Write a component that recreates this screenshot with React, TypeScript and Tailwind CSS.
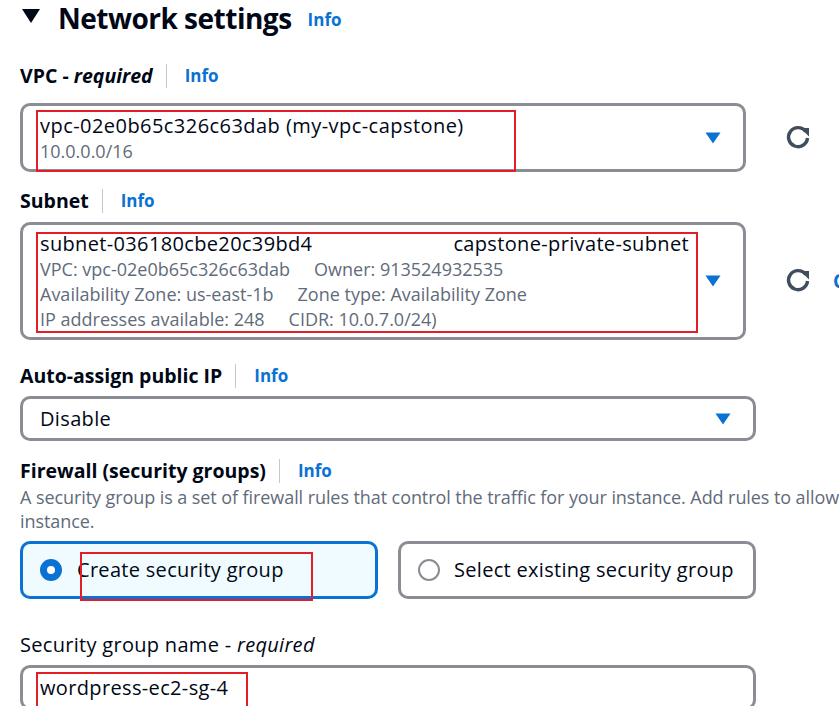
import React from "react";

const Info = () => (
  <span className="text-[17px] font-bold text-[#0972d3] leading-6">Info</span>
);

const Divider = () => <span className="ml-[13px] mr-[18px] h-[24px] w-px bg-[#c6c6cd]" />;

const Caret = ({ className = "" }: { className?: string }) => (
  <svg width="16" height="12" viewBox="0 0 16 12" className={className}>
    <path d="M0.5 0.5h15L8 11.5z" fill="#0972d3" />
  </svg>
);

const Refresh = () => (
  <svg width="26" height="26" viewBox="0 0 26 26" fill="none">
    <path d="M20.6 6.4A9.5 9.5 0 1 0 22.5 13" stroke="#414d5c" strokeWidth="3.4" />
    <path d="M15.5 3h8.5v8.5z" fill="#414d5c" />
  </svg>
);

const RedBox = ({ className }: { className: string }) => (
  <div className={`pointer-events-none absolute border-2 border-[#e41e26] ${className}`} />
);

export default function App() {
  return (
    <div className="relative h-[706px] w-[839px] overflow-hidden bg-white font-['Open_Sans',sans-serif] text-[#000716]">
      <div className="w-[1100px] pl-[20px]">
        {/* Header */}
        <div className="mt-[-2px] flex h-[40px] items-center">
          <svg width="18" height="14" viewBox="0 0 18 14" className="ml-[2px] mt-[-4px]">
            <path d="M0 0h18L9 14z" fill="#000716" />
          </svg>
          <h2 className="ml-[18px] text-[28px] font-bold leading-9 tracking-[-0.5px]">Network settings</h2>
          <span className="ml-[16px] mt-[4px]">
            <Info />
          </span>
        </div>

        {/* VPC */}
        <div className="mt-[24px] flex h-[28px] items-center">
          <span className="text-[19.5px] font-bold leading-6">
            VPC - <i>required</i>
          </span>
          <Divider />
          <Info />
        </div>
        <div className="mt-[13px] flex items-center">
          <div className="relative flex h-[69px] w-[726px] items-center rounded-[10px] border-[3px] border-[#8c8c94] pl-[17px] pr-[22px]">
            <div className="flex-1">
              <div className="text-[20px] leading-[26px] tracking-[0.45px]">vpc-02e0b65c326c63dab (my-vpc-capstone)</div>
              <div className="text-[18px] leading-[24px] text-[#5f6b7a]">10.0.0.0/16</div>
            </div>
            <Caret />
            <RedBox className="left-[13px] top-[4px] h-[62px] w-[480px]" />
          </div>
          <div className="ml-[39px]">
            <Refresh />
          </div>
        </div>

        {/* Subnet */}
        <div className="mt-[15px] flex h-[28px] items-center">
          <span className="text-[19.5px] font-bold leading-6">Subnet</span>
          <Divider />
          <Info />
        </div>
        <div className="mt-[7px] flex items-center">
          <div className="relative flex h-[118px] w-[726px] items-center rounded-[10px] border-[3px] border-[#8c8c94] pl-[17px] pr-[22px]">
            <div className="flex-1">
              <div className="flex w-[649px] justify-between text-[20px] leading-[26px] tracking-[0.35px]">
                <span>subnet-036180cbe20c39bd4</span>
                <span>capstone-private-subnet</span>
              </div>
              <div className="text-[18px] leading-[25px] text-[#5f6b7a]">
                <div className="flex gap-[24px]">
                  <span>VPC: vpc-02e0b65c326c63dab</span>
                  <span>Owner: 913524932535</span>
                </div>
                <div className="flex gap-[24px]">
                  <span>Availability Zone: us-east-1b</span>
                  <span>Zone type: Availability Zone</span>
                </div>
                <div className="flex gap-[24px]">
                  <span>IP addresses available: 248</span>
                  <span>CIDR: 10.0.7.0/24)</span>
                </div>
              </div>
            </div>
            <Caret />
            <RedBox className="left-[13px] top-[7px] h-[101px] w-[662px]" />
          </div>
          <div className="ml-[39px]">
            <Refresh />
          </div>
          <span className="ml-[22px] whitespace-nowrap text-[19px] font-bold text-[#0972d3]">Create new subnet</span>
        </div>

        {/* Auto-assign */}
        <div className="mt-[22px] flex h-[28px] items-center">
          <span className="text-[19.5px] font-bold leading-6">Auto-assign public IP</span>
          <Divider />
          <Info />
        </div>
        <div className="mt-[6px] flex h-[45px] w-[736px] items-center rounded-[10px] border-[3px] border-[#8c8c94] pl-[17px] pr-[22px]">
          <span className="flex-1 text-[20px] tracking-[0.35px]">Disable</span>
          <Caret />
        </div>

        {/* Firewall */}
        <div className="mt-[16px] flex h-[28px] items-center">
          <span className="text-[19.5px] font-bold leading-6">Firewall (security groups)</span>
          <Divider />
          <Info />
        </div>
        <p className="w-[1080px] text-[18px] leading-[24px] tracking-[-0.08px] text-[#5f6b7a]">
          A security group is a set of firewall rules that control the traffic for your instance. Add rules to allow specific traffic to reach your instance.
        </p>

        <div className="mt-[8px] grid w-[736px] grid-cols-2 gap-[20px]">
          <div className="relative flex h-[58px] items-center rounded-[10px] border-[3px] border-[#0972d3] bg-[#f0fbff] pl-[17px]">
            <span className="h-[22px] w-[22px] rounded-full border-[7px] border-[#0972d3] bg-white" />
            <span className="ml-[15px] text-[20px] tracking-[0.3px]">Create security group</span>
            <RedBox className="left-[57px] top-[8px] h-[49px] w-[233px]" />
          </div>
          <div className="flex h-[58px] items-center rounded-[10px] border-[3px] border-[#8c8c94] pl-[17px]">
            <span className="h-[22px] w-[22px] rounded-full border-[2px] border-[#8c8c94] bg-white" />
            <span className="ml-[14px] text-[20px] tracking-[0.3px]">Select existing security group</span>
          </div>
        </div>

        {/* SG name */}
        <div className="mt-[34px] text-[20px] leading-6 tracking-[0.3px]">
          Security group name - <i>required</i>
        </div>
        <div className="relative mt-[8px] flex h-[45px] w-[736px] items-center rounded-[10px] border-[3px] border-[#8c8c94] pl-[17px]">
          <span className="text-[20px] tracking-[0.35px]">wordpress-ec2-sg-4</span>
          <RedBox className="left-[13px] top-[4px] h-[40px] w-[212px]" />
        </div>
      </div>
    </div>
  );
}
